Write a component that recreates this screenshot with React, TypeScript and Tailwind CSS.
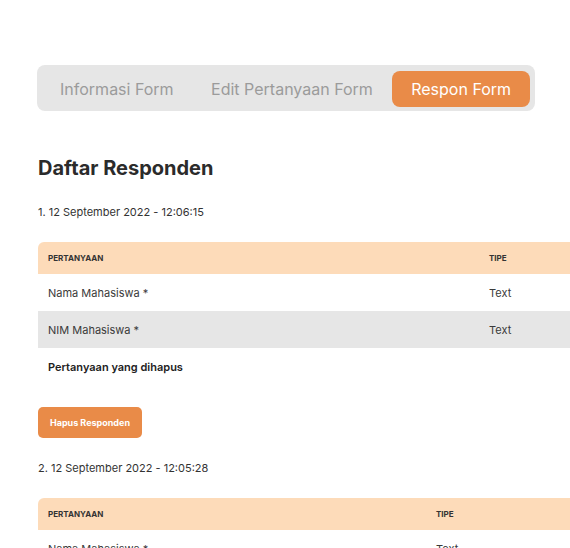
import React from "react";

const font = { fontFamily: "Inter, 'Noto Sans', sans-serif" };

function Table({ col1 }: { col1: string }) {
  return (
    <div className="w-[700px]">
      <div className="flex h-[32px] items-center rounded-tl-[6px] bg-[#fddbb9] text-[8px] font-bold text-[#333]">
        <div className={`${col1} shrink-0 pl-[10px]`}>PERTANYAAN</div>
        <div className="pl-[10px]">TIPE</div>
      </div>
      <div className="flex h-[37px] items-center bg-white pt-[2px] text-[11px] text-[#3a3a3a]">
        <div className={`${col1} shrink-0 pl-[10px]`}>Nama Mahasiswa *</div>
        <div className="pl-[10px]">Text</div>
      </div>
      <div className="flex h-[37px] items-center bg-[#e6e6e6] pt-[2px] text-[11px] text-[#3a3a3a]">
        <div className={`${col1} shrink-0 pl-[10px]`}>NIM Mahasiswa *</div>
        <div className="pl-[10px]">Text</div>
      </div>
      <div className="flex h-[38px] items-center pt-[1px] text-[11px] font-semibold text-[#222]">
        <div className="pl-[10px]">Pertanyaan yang dihapus</div>
      </div>
    </div>
  );
}

export default function App() {
  return (
    <div className="h-[548px] w-[570px] overflow-hidden bg-white" style={font}>
      <div className="pl-[37px] pt-[65px]">
        <div className="flex h-[46px] w-[498px] items-center whitespace-nowrap rounded-[8px] bg-[#e6e6e6] px-[5px] pt-[1px] text-[16px] text-[#9b9b9b]">
          <div className="flex h-[36px] w-[150px] items-center justify-center">Informasi Form</div>
          <div className="flex h-[36px] w-[201px] items-center justify-center">Edit Pertanyaan Form</div>
          <div className="flex h-[36px] w-[138px] items-center justify-center rounded-[8px] bg-[#e98b48] pt-[1px] text-white">Respon Form</div>
        </div>
      </div>
      <div className="pl-[38px]">
        <h1 className="mt-[42px] text-[20px] font-bold leading-[30px] text-[#2b2b2b]">Daftar Responden</h1>
        <div className="mt-[22px] text-[11px] leading-[14px] text-[#333]">1. 12 September 2022 - 12:06:15</div>
        <div className="mt-[23px]">
          <Table col1="w-[441px]" />
        </div>
        <button className="mt-[21px] h-[31px] w-[104px] rounded-[5px] bg-[#e98b48] text-[9px] font-bold text-white">Hapus Responden</button>
        <div className="mt-[23px] text-[11px] leading-[14px] text-[#333]">2. 12 September 2022 - 12:05:28</div>
        <div className="mt-[23px]">
          <Table col1="w-[388px]" />
        </div>
      </div>
    </div>
  );
}
